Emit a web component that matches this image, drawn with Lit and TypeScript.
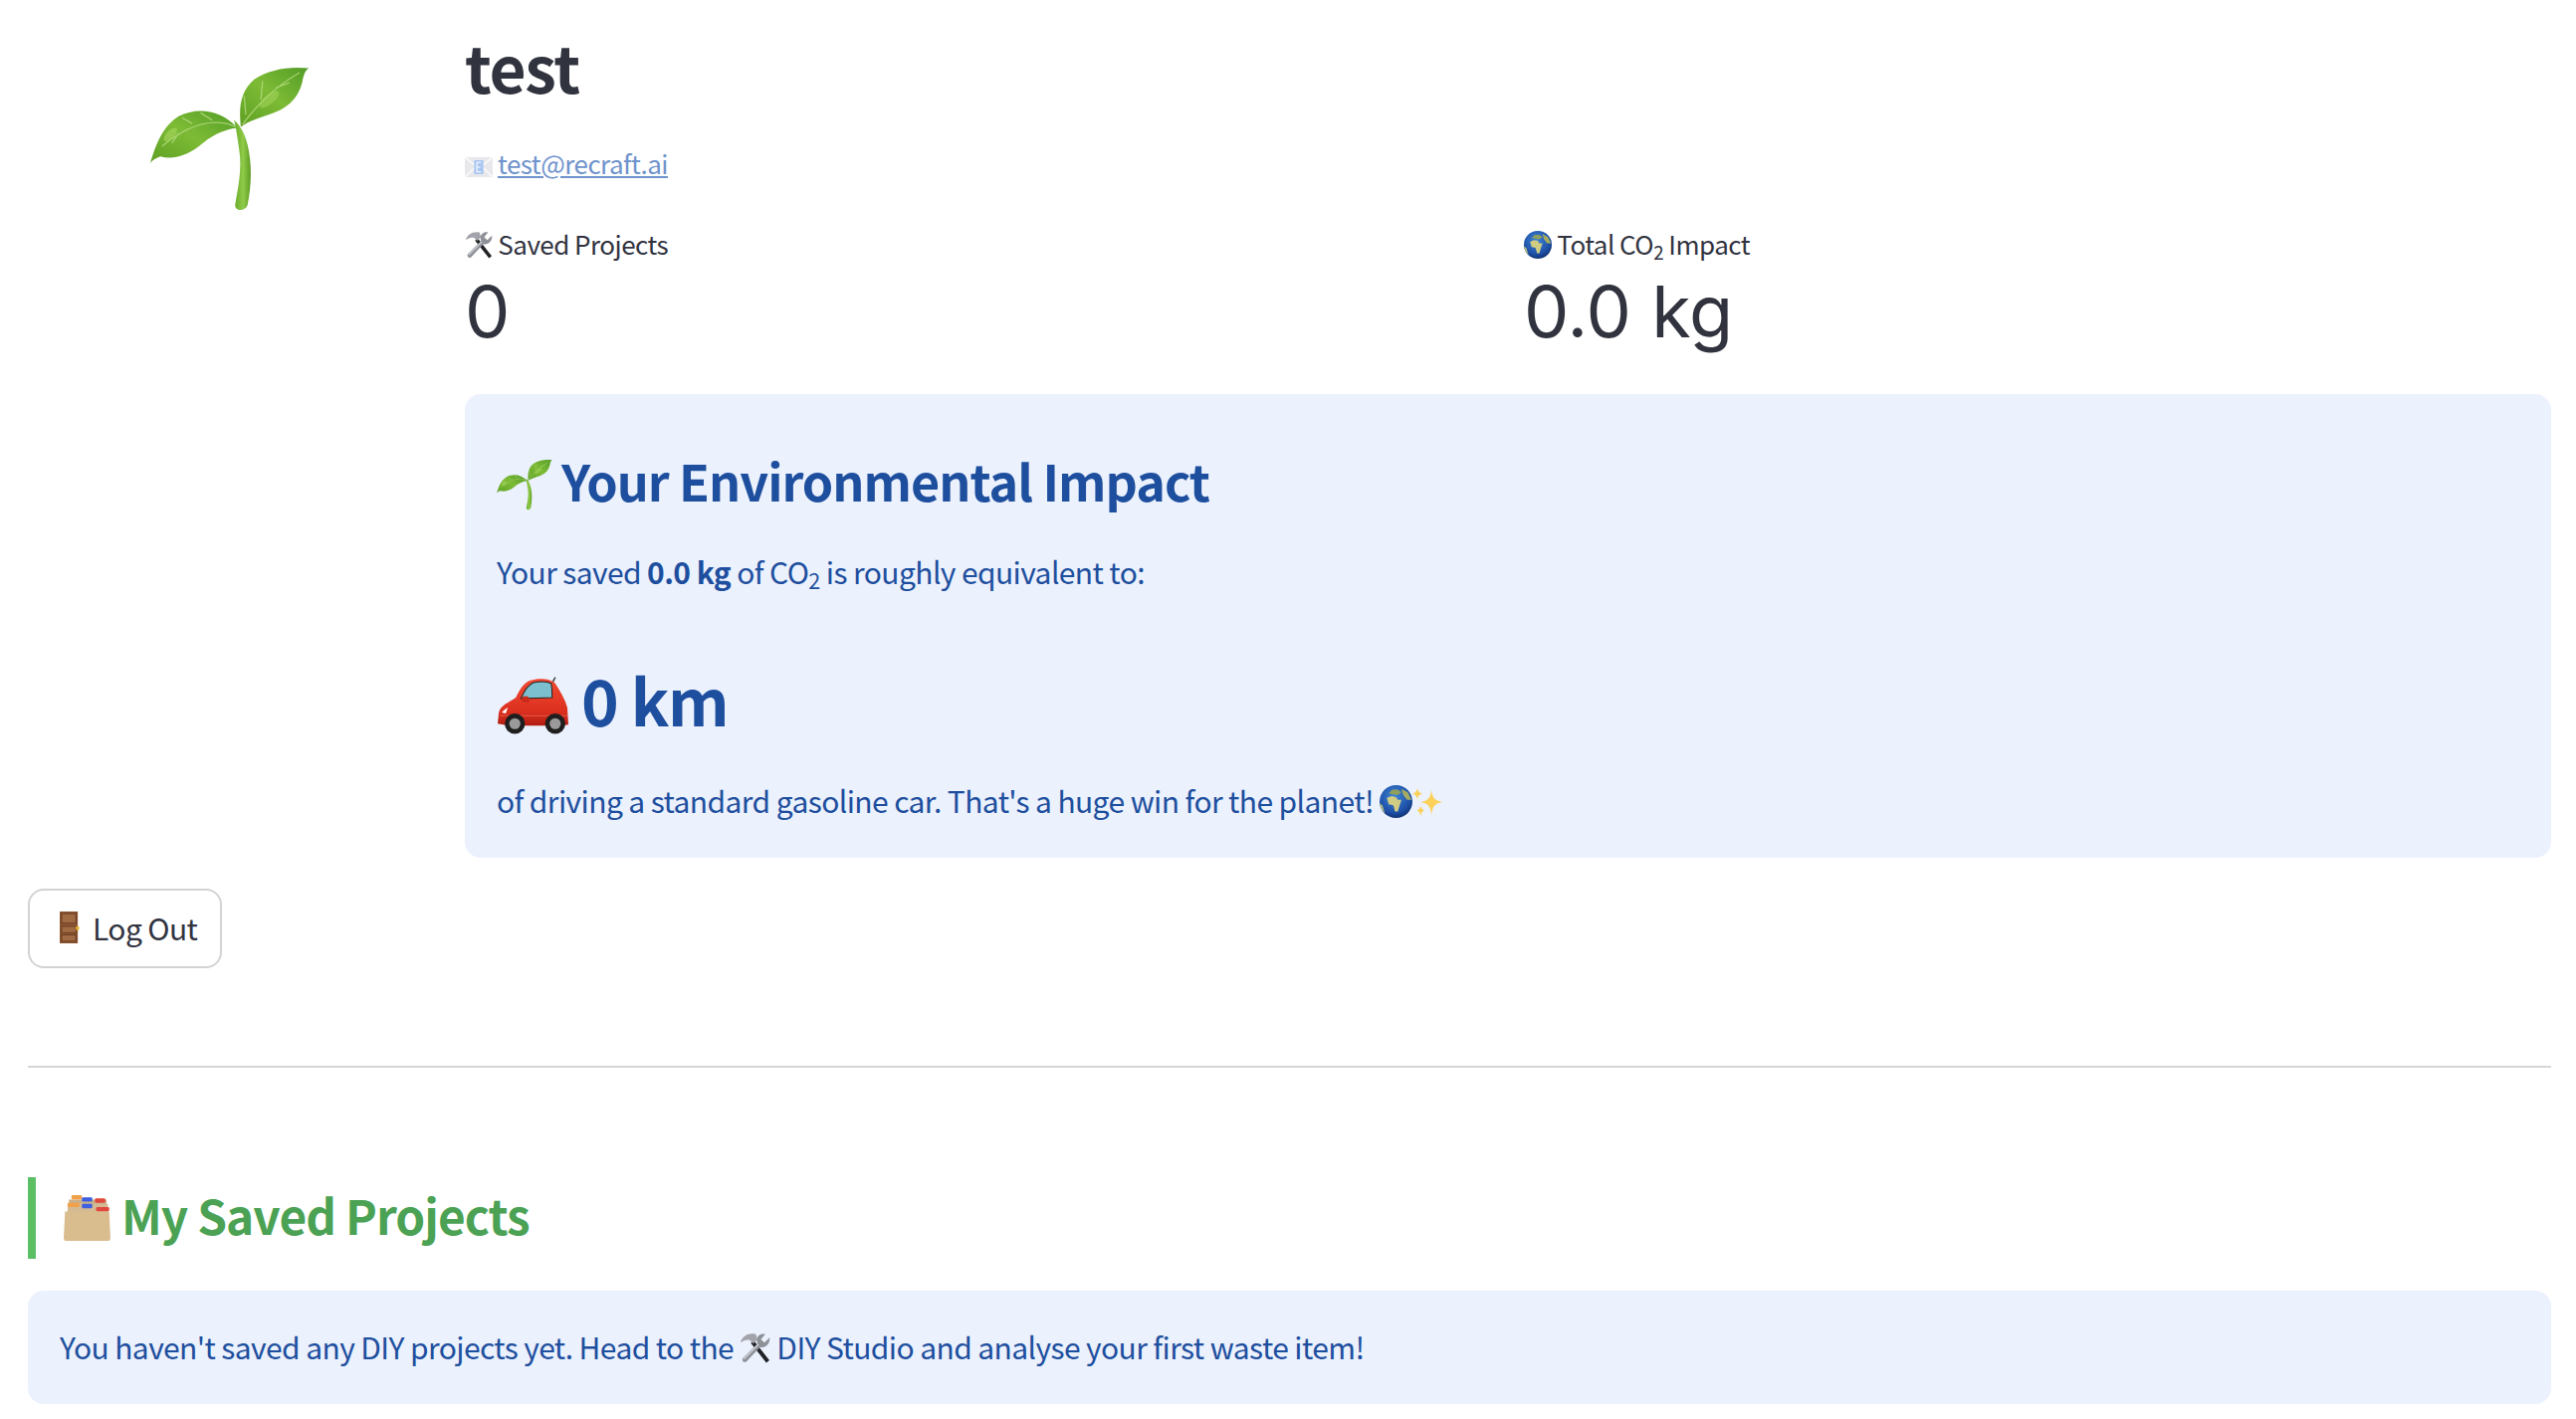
import { LitElement, html, css, svg } from "lit";
import { customElement, property } from "lit/decorators.js";

const ICONS: Record<string, unknown> = {
  sprout: svg`<svg viewBox="65 50 475 432" xmlns="http://www.w3.org/2000/svg">
    <defs>
      <linearGradient id="lf" x1="0" y1="1" x2="1" y2="0"><stop offset="0" stop-color="#5ea024"/><stop offset=".5" stop-color="#7dbb35"/><stop offset="1" stop-color="#529c26"/></linearGradient>
      <linearGradient id="st" x1="0" y1="0" x2="1" y2="0"><stop offset="0" stop-color="#69ab2a"/><stop offset=".55" stop-color="#8fca48"/><stop offset="1" stop-color="#5c9c22"/></linearGradient>
    </defs>
    <path d="M335 232C328 170 335 125 375 90 420 60 480 50 538 57 525 65 522 80 518 100 505 150 470 180 420 195 385 208 355 215 335 232Z" fill="url(#lf)"/>
    <path d="M65 340C80 290 100 230 150 200 200 175 270 175 325 235 280 240 245 260 210 290 170 320 130 330 95 320 80 325 70 332 65 340Z" fill="url(#lf)"/>
    <path d="M340 225C380 170 430 115 510 70M350 195 345 140M395 150 400 95M440 115 480 100M322 232C260 205 190 215 100 290M250 212 215 190M190 222 160 205M150 250 130 280" fill="none" stroke="#b9de84" stroke-width="4" opacity=".75"/>
    <ellipse cx="125" cy="255" rx="26" ry="12" transform="rotate(-45 125 255)" fill="#a8d860" opacity=".6"/>
    <ellipse cx="420" cy="150" rx="36" ry="14" transform="rotate(-40 420 150)" fill="#a8d860" opacity=".5"/>
    <path d="M315 212C330 225 345 245 355 285 368 340 368 400 355 465 348 485 318 485 318 465 325 420 340 360 330 300 325 265 322 240 315 212Z" fill="url(#st)"/>
  </svg>`,
  envelope: svg`<svg viewBox="0 0 36 36" xmlns="http://www.w3.org/2000/svg">
    <rect x="0" y="5" width="36" height="26" fill="#e8e8ec"/>
    <path d="M0 5 18 20 36 5M0 31 14 17M36 31 22 17" fill="none" stroke="#fafafa" stroke-width="2"/>
    <rect x="12" y="9" width="12" height="18" rx="1" fill="#a9c6f2"/>
    <path d="M15 12h6M15 18h5M15 24h6M15.500 12v12" stroke="#e7eefb" stroke-width="2" fill="none"/>
  </svg>`,
  tools: svg`<svg viewBox="0 0 36 36" xmlns="http://www.w3.org/2000/svg">
    <path d="M15 11 33 34" stroke="#222226" stroke-width="4.500"/>
    <path d="M1 12C3 4 11 0 19 2L21 8 16 13 12 9C8 8 5 9 1 12Z" fill="#a3a4ab"/>
    <path d="M35 6 29 12 25 8 30 2C24 0 18 6 21 13L4 30C2 33 5 36 8 34L24 17C30 19 36 13 35 6Z" fill="#8e9198"/>
    <path d="M22 14 5 31" stroke="#d4d6da" stroke-width="1.500"/>
  </svg>`,
  globe: svg`<svg viewBox="0 0 36 36" xmlns="http://www.w3.org/2000/svg">
    <defs><radialGradient id="g" cx=".45" cy=".35" r=".7"><stop offset="0" stop-color="#3f86da"/><stop offset=".7" stop-color="#1d4fa5"/><stop offset="1" stop-color="#0d2a66"/></radialGradient></defs>
    <circle cx="18" cy="18" r="18" fill="url(#g)"/>
    <path d="M8 14 13 12 18 13 20 16 24 16 22 22 20 29 17 29 15 22 10 21Z" fill="#d0cc82"/>
    <path d="M10 9 14 5 20 5 24 8 20 11 14 10Z" fill="#8f9f5c"/>
    <path d="M24 4 31 8 35 16 30 16 26 11Z" fill="#a5ab62"/>
    <path d="M0 20 3 22 6 31 2 26Z" fill="#b7c082"/>
  </svg>`,
  sparkles: svg`<svg viewBox="0 0 36 36" xmlns="http://www.w3.org/2000/svg">
    <g fill="#fbd15a">
      <path d="M23 3C24 12 26 16 36 18 26 20 24 24 23 34 22 24 20 20 10 18 20 16 22 12 23 3Z"/>
      <path d="M6 1C6.500 5 8 7 12 8 8 9 6.500 11 6 15 5.500 11 4 9 0 8 4 7 5.500 5 6 1Z"/>
      <path d="M10 22C10.500 26 12 27 15 28 12 29 10.500 31 10 36 9.500 31 8 29 5 28 8 27 9.500 26 10 22Z"/>
    </g>
  </svg>`,
  car: svg`<svg viewBox="0 0 72 56" xmlns="http://www.w3.org/2000/svg">
    <defs><linearGradient id="cb" x1="0" y1="0" x2="0" y2="1"><stop offset="0" stop-color="#ef4a32"/><stop offset=".7" stop-color="#dc2f1e"/><stop offset="1" stop-color="#b01c12"/></linearGradient></defs>
    <path d="M58 0 55 6" stroke="#444" stroke-width="1.500"/>
    <path d="M2 36C3 28 12 25 19 20 24 10 28 3 38 2 46 1 54 2 58 6 63 14 68 22 70 30L71 47 62 48H12L1 46Z" fill="url(#cb)"/>
    <path d="M24 21C28 13 31 7 37 5 43 4 50 4 54 6 55 12 55 17 55 20Z" fill="#7cc0cf" stroke="#222" stroke-width="1"/>
    <rect x="25" y="19" width="7" height="6" rx="2" fill="#c92a1a"/>
    <path d="M5 35C7 33 9 31 11 30L9 36Z" fill="#fff"/>
    <path d="M3 38H70" stroke="#f0705a" stroke-width="1" opacity=".7"/>
    <g><circle cx="18" cy="46" r="10" fill="#1e1e1e"/><circle cx="18" cy="46" r="5.500" fill="#9a9a9a"/><circle cx="58" cy="46" r="10" fill="#1e1e1e"/><circle cx="58" cy="46" r="5.500" fill="#9a9a9a"/></g>
  </svg>`,
  door: svg`<svg viewBox="0 0 16 30" preserveAspectRatio="none" xmlns="http://www.w3.org/2000/svg">
    <rect x="0" y="0" width="14.500" height="30" fill="#8b5532"/>
    <rect x="1.500" y="2" width="11.500" height="9" fill="#a06a42" stroke="#663a20" stroke-width=".8"/>
    <rect x="1.500" y="14" width="11.500" height="6" fill="#a06a42" stroke="#663a20" stroke-width=".8"/>
    <rect x="1.500" y="22" width="11.500" height="6" fill="#a06a42" stroke="#663a20" stroke-width=".8"/>
    <rect x="13" y="14" width="2.500" height="3.500" fill="#e2b32f"/>
  </svg>`,
  box: svg`<svg viewBox="0 0 36 42" preserveAspectRatio="none" xmlns="http://www.w3.org/2000/svg">
    <path d="M4 4H33V18H4Z" fill="#c9b08a"/>
    <rect x="6" y="0" width="8" height="4" rx="1" fill="#f0a14a"/>
    <rect x="14" y="2" width="8" height="4" rx="1" fill="#3e5fe0"/>
    <rect x="24" y="3" width="8" height="4" rx="1" fill="#e2483d"/>
    <path d="M3 8H34V18H3Z" fill="#d4ba92"/>
    <rect x="3" y="7" width="9" height="4" rx="1" fill="#f0a14a"/>
    <rect x="14" y="8" width="8" height="4" rx="1" fill="#3e5fe0"/>
    <rect x="25" y="11" width="10" height="4" rx="1" fill="#e2483d"/>
    <path d="M1 15H35L36 40 35 42H1L0 40Z" fill="#dabd8e"/>
  </svg>`,
};

@customElement("em-icon")
class EmIcon extends LitElement {
  @property() name = "";
  static styles = css`
    :host { display: inline-block; vertical-align: -0.12em; line-height: 0; }
    svg { width: 100%; height: 100%; display: block; overflow: visible; }
  `;
  render() { return ICONS[this.name]; }
}

@customElement("app-root")
class AppRoot extends LitElement {
  static styles = css`
    :host {
      display: block;
      box-sizing: border-box;
      height: 1426px;
      overflow: hidden;
      background: #fff;
      color: #31333f;
      font-family: "Noto Sans CJK SC", "Noto Sans", sans-serif;
      font-size: 30px;
      letter-spacing: -0.02em;
      line-height: 48px;
      padding: 0 25px 0 28px;
    }
    .top { display: grid; grid-template-columns: 439px 1fr; }
    .logo { padding: 66px 0 0 123px; }
    .i-logo { width: 160px; height: 146px; }
    h1 { margin: 0; padding: 25px 0 0; font-size: 64px; letter-spacing: -0.02em; line-height: 82px; font-weight: 600; height: 88px; }
    .mail { margin-top: 27px; height: 48px; white-space: nowrap; font-size: 26px; letter-spacing: -0.02em; }
    .mail a { color: #6f93cc; text-decoration: underline; }
    .i-mail { width: 28px; height: 28px; margin-right: 5px; vertical-align: -7px; }
    .metrics { display: grid; grid-template-columns: 1fr 1fr; column-gap: 32px; margin-top: 33px; }
    .mlabel { font-size: 26px; letter-spacing: -0.02em; line-height: 48px; white-space: nowrap; }
    .i-small { width: 28px; height: 28px; vertical-align: -4px; }
    .mvalue { font-family: "Inter", "Noto Sans", sans-serif; font-size: 72px; letter-spacing: 0; line-height: 88px; }
    sub { font-size: 0.72em; line-height: 0; vertical-align: -0.25em; }
    .impact { margin-top: 39px; background: #ebf1fd; border-radius: 16px; color: #1e4f9e; padding: 52px 32px 32px; height: 466px; box-sizing: border-box; }
    h2 { margin: 0; font-size: 50.300px; letter-spacing: -0.02em; line-height: 68px; font-weight: 600; white-space: nowrap; }
    .i-h2 { width: 56px; height: 52px; margin-right: 9px; vertical-align: -9px; }
    .impact p { margin: 0; white-space: nowrap; }
    .impact .saved { margin-top: 34px; }
    b { font-weight: 700; }
    .km { margin-top: 58px; font-size: 64px; letter-spacing: -0.02em; line-height: 92px; font-weight: 600; white-space: nowrap; }
    .i-car { width: 73px; height: 60px; margin-right: 12px; vertical-align: -9px; }
    .impact .drive { margin-top: 32px; }
    .i-globe { width: 33px; height: 33px; vertical-align: -5px; }
    .i-spark { width: 30px; height: 30px; vertical-align: -4px; }
    .logout {
      display: inline-flex; align-items: center; gap: 13px;
      box-sizing: border-box; height: 80px; width: 195px; margin-top: 31px; padding: 0 0 3px 30px;
      border: 2px solid #d3d3d6; border-radius: 16px; background: #fff; color: #31333f;
      font: inherit; font-size: 30px; letter-spacing: -0.02em;
    }
    .i-door { width: 20px; height: 32px; }
    hr { margin: 98px 0 0; border: 0; border-top: 2px solid #d6d6d8; }
    .section {
      margin-top: 110px; height: 82px; border-left: 8px solid #5cbf66; padding-left: 28px;
      display: flex; align-items: center; gap: 11px; box-sizing: border-box;
    }
    .section h3 { margin: 0 0 6px; font-size: 47.800px; letter-spacing: -0.02em; line-height: 64px; font-weight: 700; color: #4ca254; white-space: nowrap; }
    .i-box { width: 47px; height: 46px; flex: none; }
    .note { margin-top: 32px; background: #ebf1fd; border-radius: 16px; color: #1e4f9e; padding: 30px 32px; height: 114px; box-sizing: border-box; white-space: nowrap; line-height: 52px; }
    .i-inline { width: 31px; height: 31px; vertical-align: -4px; }
  `;

  render() {
    return html`
      <div class="top">
        <div class="logo"><em-icon class="i-logo" name="sprout"></em-icon></div>
        <div>
          <h1>test</h1>
          <div class="mail"><em-icon class="i-mail" name="envelope"></em-icon><a href="#">test@recraft.ai</a></div>
          <div class="metrics">
            <div>
              <div class="mlabel"><em-icon class="i-small" name="tools"></em-icon> Saved Projects</div>
              <div class="mvalue">0</div>
            </div>
            <div>
              <div class="mlabel"><em-icon class="i-small" name="globe"></em-icon> Total CO<sub>2</sub> Impact</div>
              <div class="mvalue">0.0 kg</div>
            </div>
          </div>
          <div class="impact">
            <h2><em-icon class="i-h2" name="sprout"></em-icon>Your Environmental Impact</h2>
            <p class="saved">Your saved <b>0.0 kg</b> of CO<sub>2</sub> is roughly equivalent to:</p>
            <div class="km"><em-icon class="i-car" name="car"></em-icon>0 km</div>
            <p class="drive">of driving a standard gasoline car. That's a huge win for the planet! <em-icon class="i-globe" name="globe"></em-icon><em-icon class="i-spark" name="sparkles"></em-icon></p>
          </div>
        </div>
      </div>
      <button class="logout"><em-icon class="i-door" name="door"></em-icon>Log Out</button>
      <hr />
      <div class="section"><em-icon class="i-box" name="box"></em-icon><h3>My Saved Projects</h3></div>
      <div class="note">You haven't saved any DIY projects yet. Head to the <em-icon class="i-inline" name="tools"></em-icon> DIY Studio and analyse your first waste item!</div>
    `;
  }
}
